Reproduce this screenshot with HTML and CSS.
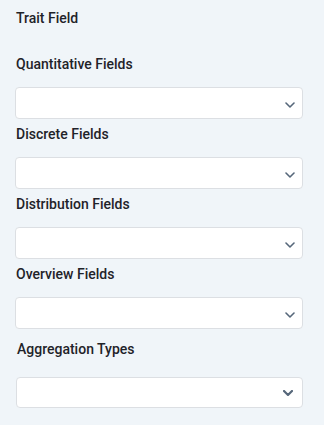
FILE: index.html
```html
<!DOCTYPE html>
<html lang="en">
<head>
  <meta charset="UTF-8" />
  <title>Trait Field</title>
  <link rel="stylesheet" href="styles.css">
</head>
<body>
  <div class="panel">
    <div class="title">Trait Field</div>

    <div class="field">
      <div class="label">Quantitative Fields</div>
      <div class="select">
        <svg class="chevron" width="10" height="6" viewBox="0 0 10 6"><polyline points="1,1 5,5 9,1" /></svg>
      </div>
    </div>

    <div class="field">
      <div class="label">Discrete Fields</div>
      <div class="select">
        <svg class="chevron" width="10" height="6" viewBox="0 0 10 6"><polyline points="1,1 5,5 9,1" /></svg>
      </div>
    </div>

    <div class="field">
      <div class="label">Distribution Fields</div>
      <div class="select">
        <svg class="chevron" width="10" height="6" viewBox="0 0 10 6"><polyline points="1,1 5,5 9,1" /></svg>
      </div>
    </div>

    <div class="field">
      <div class="label">Overview Fields</div>
      <div class="select">
        <svg class="chevron" width="10" height="6" viewBox="0 0 10 6"><polyline points="1,1 5,5 9,1" /></svg>
      </div>
    </div>

    <div class="field agg">
      <div class="label">Aggregation Types</div>
      <div class="select">
        <svg class="chevron bold" width="10" height="6" viewBox="0 0 10 6"><polyline points="1,1 5,5 9,1" /></svg>
      </div>
    </div>
  </div>
</body>
</html>
```

FILE: styles.css
```css
* {
  box-sizing: border-box;
}

body {
  margin: 0;
  background-color: #f0f5f9;
  font-family: Roboto, "Liberation Sans", sans-serif;
  font-size: 14px;
  font-weight: 500;
  color: #1f2329;
}

.panel {
  padding: 8px 21px 0 15px;
}

.title {
  line-height: 20px;
  padding-left: 1px;
  margin-bottom: 26px;
}

.field {
  margin-bottom: 5px;
}

.label {
  line-height: 20px;
  padding-left: 1px;
  margin-bottom: 13px;
}

.select {
  height: 32px;
  background: #fff;
  border: 1px solid #dcdfe3;
  border-radius: 4px;
  display: flex;
  align-items: center;
  justify-content: flex-end;
  padding: 4px 7px 0 0;
}

.chevron polyline {
  fill: none;
  stroke: #56677a;
  stroke-width: 1.6;
  stroke-linecap: round;
  stroke-linejoin: round;
}

.chevron.bold polyline {
  stroke-width: 2.2;
}

.field.agg {
  margin-top: 10px;
  padding-left: 1px;
}

.field.agg .label {
  margin-bottom: 18px;
}

.field.agg .select {
  height: 31px;
  padding: 0 9px 0 0;
}
```
